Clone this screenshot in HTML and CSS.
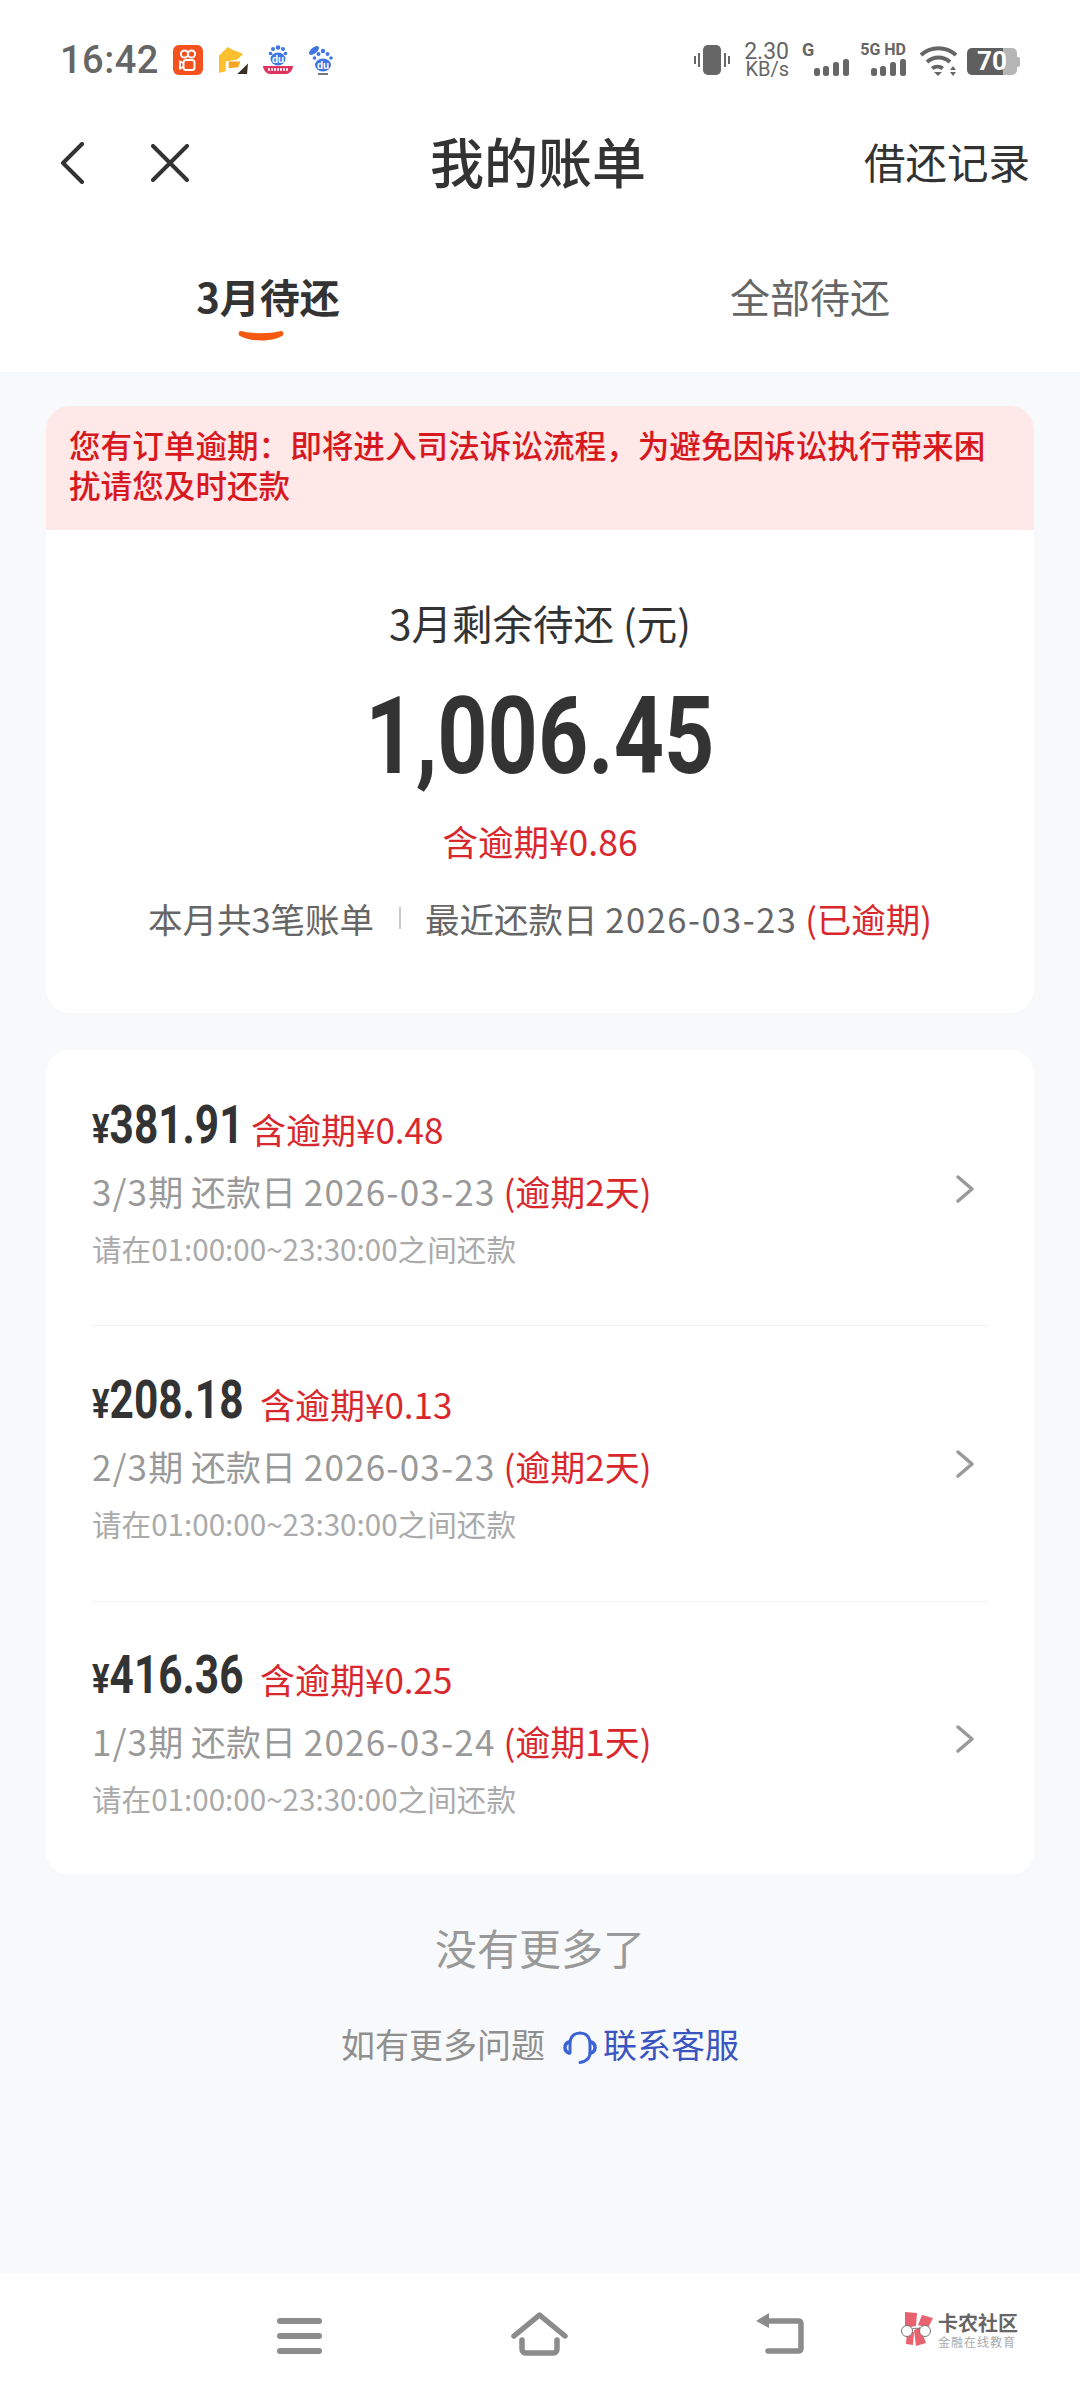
FILE: index.html
```html
<!DOCTYPE html>
<html lang="zh-CN">
<head>
    <meta charset="UTF-8">
    <meta name="viewport" content="width=device-width, initial-scale=1.0">
    <title>我的账单</title>
    <link rel="stylesheet" href="styles.css">
</head>
<body>
    <header class="top">
        <div class="status-bar">
            <span class="clock">16:42</span>
            <div class="app-icons">
                <svg class="app-icon" viewBox="0 0 30 30">
                    <rect width="30" height="30" rx="6" fill="#f4511e"/>
                    <circle cx="11.500" cy="9" r="3.600" fill="none" stroke="#fff" stroke-width="2"/>
                    <circle cx="18.500" cy="9" r="3.600" fill="none" stroke="#fff" stroke-width="2"/>
                    <rect x="10.500" y="15" width="11" height="10" rx="2.500" fill="none" stroke="#fff" stroke-width="2"/>
                    <path d="M10 18l-3 -1.500v7l3 -1.500" fill="none" stroke="#fff" stroke-width="1.800"/>
                </svg>
                <svg class="app-icon" viewBox="0 0 31 29">
                    <path d="M1 10L10 1l5 3 11 4 -6 6 -12 2v10l-7 2z" fill="#fbc02d"/>
                    <path d="M11 16h12l-2 6 -10 1z" fill="#f6a623"/>
                    <path d="M20 29L31 18l-1 11z" fill="#3b2f23"/>
                </svg>
                <svg class="app-icon" viewBox="0 0 30 30">
                    <g fill="#3f76e4">
                        <circle cx="15" cy="2.500" r="2.300"/><circle cx="10" cy="4" r="2"/><circle cx="20" cy="4" r="2"/>
                        <circle cx="7.500" cy="8.500" r="1.800"/><circle cx="22.500" cy="8.500" r="1.800"/>
                        <ellipse cx="15" cy="14" rx="7.500" ry="6.500"/>
                    </g>
                    <text class="du" x="15" y="17.500" font-size="10">du</text>
                    <path d="M0 21h30c0 3 -3 8 -7 8h-16c-4 0 -7 -5 -7 -8z" fill="#e0335f"/>
                    <path d="M5 24.500h20" stroke="#fff" stroke-width="2.500" stroke-dasharray="2 1"/>
                </svg>
                <svg class="app-icon app-icon-small" viewBox="0 0 25 30">
                    <ellipse cx="6" cy="5.500" rx="6" ry="3" transform="rotate(-40 6 5.500)" fill="#3f76e4"/>
                    <g fill="#3f76e4">
                        <circle cx="15" cy="6" r="2.200"/><circle cx="10.500" cy="9" r="2"/><circle cx="19.500" cy="9" r="2"/>
                        <circle cx="6.500" cy="13" r="1.800"/><circle cx="23" cy="13" r="1.800"/>
                        <ellipse cx="15" cy="20" rx="8" ry="6.500"/>
                    </g>
                    <text class="du" x="15" y="23.500" font-size="10">du</text>
                    <rect x="10" y="28" width="10" height="2" fill="#777"/>
                </svg>
            </div>
            <div class="status-right">
                <svg class="vibrate" viewBox="0 0 36 30">
                    <rect x="9" y="0" width="18" height="30" rx="5" fill="#666"/>
                    <path d="M5 8v14M1 11v8M31 8v14M35 11v8" stroke="#666" stroke-width="2"/>
                </svg>
                <div class="speed"><span>2.30</span><span class="speed-unit">KB/s</span></div>
                <div class="signal signal-g">
                    <span class="signal-label">G</span>
                    <svg class="bars" viewBox="0 0 35 17"><g fill="#666"><rect x="0" y="9" width="6" height="8" rx="2.500"/><rect x="9" y="7" width="6" height="10" rx="2.500"/><rect x="19" y="3" width="6" height="14" rx="2.500"/><rect x="29" y="0" width="6" height="17" rx="2.500"/></g></svg>
                </div>
                <div class="signal signal-5g">
                    <span class="signal-label">5G HD</span>
                    <svg class="bars" viewBox="0 0 35 17"><g fill="#666"><rect x="0" y="9" width="6" height="8" rx="2.500"/><rect x="9" y="7" width="6" height="10" rx="2.500"/><rect x="19" y="3" width="6" height="14" rx="2.500"/><rect x="29" y="0" width="6" height="17" rx="2.500"/></g></svg>
                </div>
                <svg class="wifi" viewBox="0 0 37 30">
                    <g fill="none" stroke="#666" stroke-width="4">
                        <path d="M1 9c10 -9 25 -9 35 0"/>
                        <path d="M7 16c7 -6 16 -6 23 0"/>
                    </g>
                    <path d="M11 21c4 -3 9 -3 13 0l-2.500 3c-3 -2 -5 -2 -8 0z" fill="#666"/>
                    <path d="M14 26h8l-4 4z" fill="#666"/>
                    <path d="M33 20l3 4h-6zM30 26h6l-3 4z" fill="#666"/>
                </svg>
                <div class="battery"><div class="battery-level">70</div><div class="battery-tip"></div></div>
            </div>
        </div>

        <nav class="nav-bar">
            <div class="nav-icons">
                <svg class="nav-back" viewBox="0 0 24 42"><path d="M22 2L3 21l19 19" fill="none" stroke="#333" stroke-width="4" stroke-linecap="round" stroke-linejoin="round"/></svg>
                <svg class="nav-close" viewBox="0 0 38 38"><path d="M2 2l34 34M36 2L2 36" fill="none" stroke="#333" stroke-width="4" stroke-linecap="round"/></svg>
            </div>
            <div class="nav-title">我的账单</div>
            <div class="nav-action">借还记录</div>
        </nav>

        <div class="tabs">
            <div class="tab tab-active">
                <span>3月待还</span>
                <svg class="tab-mark" viewBox="0 0 46 13"><path d="M3 1C15 4 31 4 43 1C46 1 46 5 44 6C34 12 12 12 2 6C0 5 0 1 3 1z" fill="#f4590f"/></svg>
            </div>
            <div class="tab">全部待还</div>
        </div>
    </header>

    <main class="content">
        <section class="card summary">
            <div class="warning">您有订单逾期：即将进入司法诉讼流程，为避免因诉讼执行带来困扰请您及时还款</div>
            <div class="summary-body">
                <div class="summary-title">3月剩余待还 (元)</div>
                <div class="summary-amount"><span>1,006.45</span></div>
                <div class="summary-late">含逾期¥0.86</div>
                <div class="summary-meta">
                    <span>本月共3笔账单</span>
                    <i class="meta-line"></i>
                    <span>最近还款日 <span class="num">2026-03-23</span> <em class="red">(已逾期)</em></span>
                </div>
            </div>
        </section>

        <section class="card bills">
            <div class="bill">
                <div class="bill-info">
                    <div class="bill-top"><span class="bill-amount"><small>¥</small>381.91</span><span class="bill-late">含逾期¥0.48</span></div>
                    <div class="bill-date"><span class="num">3/3</span>期 还款日 <span class="num">2026-03-23</span> <em class="red">(逾期2天)</em></div>
                    <div class="bill-hint">请在01:00:00~23:30:00之间还款</div>
                </div>
                <svg class="chevron" viewBox="0 0 20 30"><path d="M3 3l14 12L3 27" fill="none" stroke="#999" stroke-width="3.500" stroke-linecap="round" stroke-linejoin="round"/></svg>
            </div>
            <div class="bill">
                <div class="bill-info">
                    <div class="bill-top"><span class="bill-amount bill-amount-wide"><small>¥</small>208.18</span><span class="bill-late">含逾期¥0.13</span></div>
                    <div class="bill-date"><span class="num">2/3</span>期 还款日 <span class="num">2026-03-23</span> <em class="red">(逾期2天)</em></div>
                    <div class="bill-hint">请在01:00:00~23:30:00之间还款</div>
                </div>
                <svg class="chevron" viewBox="0 0 20 30"><path d="M3 3l14 12L3 27" fill="none" stroke="#999" stroke-width="3.500" stroke-linecap="round" stroke-linejoin="round"/></svg>
            </div>
            <div class="bill">
                <div class="bill-info">
                    <div class="bill-top"><span class="bill-amount bill-amount-wide"><small>¥</small>416.36</span><span class="bill-late">含逾期¥0.25</span></div>
                    <div class="bill-date"><span class="num">1/3</span>期 还款日 <span class="num">2026-03-24</span> <em class="red">(逾期1天)</em></div>
                    <div class="bill-hint">请在01:00:00~23:30:00之间还款</div>
                </div>
                <svg class="chevron" viewBox="0 0 20 30"><path d="M3 3l14 12L3 27" fill="none" stroke="#999" stroke-width="3.500" stroke-linecap="round" stroke-linejoin="round"/></svg>
            </div>
        </section>

        <div class="no-more">没有更多了</div>
        <div class="contact">
            <span>如有更多问题</span>
            <svg class="headset" viewBox="0 0 34 33">
                <path d="M7 22V13C7 6 11 2 17 2s10 4 10 11v9" fill="none" stroke="#3b63d6" stroke-width="3" stroke-linecap="round"/>
                <path d="M6 11C3 12 2 14 2 16.500S3 21 6 22M28 11c3 1 4 3 4 5.500S31 21 28 22" fill="none" stroke="#3b63d6" stroke-width="3.500" stroke-linecap="round"/>
                <path d="M27 22c0 5 -4 9 -10 9.500" fill="none" stroke="#3b63d6" stroke-width="3" stroke-linecap="round"/>
            </svg>
            <span class="contact-link">联系客服</span>
        </div>
    </main>

    <footer class="bottom-nav">
        <svg class="nav-menu" viewBox="0 0 45 36"><path d="M3 3h39M3 18h39M3 33h39" stroke="#8c8c8c" stroke-width="6" stroke-linecap="round"/></svg>
        <svg class="nav-home" viewBox="0 0 57 44"><path d="M3 24L28.500 3 54 24" fill="none" stroke="#8c8c8c" stroke-width="5.500" stroke-linecap="round" stroke-linejoin="round"/><path d="M11 28v9c0 3 2 4 4 4h27c2 0 4 -1 4 -4v-9" fill="none" stroke="#8c8c8c" stroke-width="5.500" stroke-linecap="round"/></svg>
        <svg class="nav-return" viewBox="0 0 48 42"><path d="M10 9h32c2 0 3 1 3 3v24c0 2 -1 3 -3 3H12" fill="none" stroke="#8c8c8c" stroke-width="5.500" stroke-linecap="round"/><path d="M0 9l13 -8v15z" fill="#8c8c8c"/></svg>
        <div class="watermark">
            <svg class="watermark-logo" viewBox="0 0 34 34">
                <g fill="#e9626f">
                    <path d="M5 0l12 1 -1 13 -11 2z"/>
                    <path d="M22 3l11 3 -5 10 -10 -3z"/>
                    <path d="M7 20h7l-1 13 -7 -1z"/>
                    <path d="M14 18l6 -3 6 16 -10 3z"/>
                </g>
                <circle cx="7" cy="19" r="5.500" fill="#fff" stroke="#777"/>
                <circle cx="25" cy="19" r="5.500" fill="#fff" stroke="#777"/>
                <path d="M12 17c3 -1 6 -1 8 0" fill="none" stroke="#777"/>
            </svg>
            <div class="watermark-text">
                <span class="watermark-name">卡农社区</span>
                <span class="watermark-sub">金融在线教育</span>
            </div>
        </div>
    </footer>
</body>
</html>
```

FILE: styles.css
```css
* {
    box-sizing: border-box;
}

body {
    margin: 0;
    width: 1080px;
    height: 2400px;
    display: flex;
    flex-direction: column;
    background-color: #f8f9fa;
    color: #333;
    font-family: "Noto Sans CJK SC", "Noto Sans", sans-serif;
}

em {
    font-style: normal;
}

.red {
    color: #d9272e;
}

.num {
    letter-spacing: 1.200px;
}

.top {
    height: 372px;
    background-color: #fff;
}

/* status bar */
.status-bar {
    height: 108px;
    padding: 42px 60px 0;
    display: flex;
    align-items: flex-start;
}

.clock {
    font-family: Roboto, sans-serif;
    font-size: 38px;
    font-weight: 500;
    line-height: 36px;
    letter-spacing: 0.500px;
    color: #666;
    width: 113px;
}

.app-icons {
    display: flex;
    gap: 15px;
    padding-top: 3px;
}

.app-icon {
    width: 30px;
    height: 30px;
}

.app-icon-small {
    width: 25px;
}

.du {
    fill: #fff;
    font-family: "Liberation Sans", sans-serif;
    font-weight: 700;
    text-anchor: middle;
}

.status-right {
    margin-left: auto;
    display: flex;
    align-items: flex-start;
}

.vibrate {
    width: 36px;
    height: 30px;
    margin-top: 3px;
}

.speed {
    width: 46px;
    margin-left: 13px;
    display: flex;
    flex-direction: column;
    align-items: flex-end;
    font-family: Roboto, sans-serif;
    font-size: 23px;
    line-height: 19px;
    color: #666;
}

.speed-unit {
    font-size: 20px;
    line-height: 17px;
}

.signal {
    display: flex;
    flex-direction: column;
    align-items: flex-end;
    font-family: Roboto, sans-serif;
    font-weight: 700;
    color: #666;
}

.signal-label {
    line-height: 16px;
    white-space: nowrap;
}

.signal-g {
    width: 47px;
    margin-left: 13px;
    align-items: flex-start;
    font-size: 18px;
}

.signal-5g {
    width: 47px;
    margin-left: 10px;
    font-size: 16px;
}

.bars {
    width: 35px;
    height: 17px;
    margin-top: 1px;
}

.signal-g .bars {
    align-self: flex-end;
}

.wifi {
    width: 37px;
    height: 30px;
    margin: 4px 0 0 14px;
}

.battery {
    display: flex;
    align-items: center;
    margin: 6px 0 0 10px;
}

.battery-level {
    width: 50px;
    height: 27px;
    border-radius: 5px;
    background: linear-gradient(to right, #5f5f5f 0 36px, #b5b5b5 36px);
    color: #fff;
    font-family: Roboto, sans-serif;
    font-size: 26px;
    font-weight: 700;
    line-height: 27px;
    text-align: center;
}

.battery-tip {
    width: 3px;
    height: 10px;
    background-color: #b5b5b5;
    border-radius: 0 2px 2px 0;
}

/* nav */
.nav-bar {
    height: 110px;
    padding: 0 50px 0 60px;
    display: flex;
    align-items: center;
    justify-content: space-between;
}

.nav-icons {
    width: 236px;
    display: flex;
    align-items: center;
    gap: 67px;
}

.nav-back {
    width: 24px;
    height: 42px;
}

.nav-close {
    width: 38px;
    height: 38px;
}

.nav-title {
    margin-top: -5px;
    font-size: 54px;
    font-weight: 500;
}

.nav-action {
    margin-top: -5px;
    width: 250px;
    text-align: right;
    font-size: 41.500px;
}

.tabs {
    display: flex;
    padding-top: 48px;
}

.tab {
    width: 540px;
    height: 60px;
    line-height: 60px;
    text-align: center;
    font-size: 40px;
    color: #666;
}

.tab-active {
    display: flex;
    flex-direction: column;
    align-items: center;
    padding-right: 4px;
    font-weight: 700;
    color: #333;
}

.tab-mark {
    flex-shrink: 0;
    width: 46px;
    height: 13px;
    margin: 4px 14px 0 0;
}

/* cards */
.content {
    flex: 1;
    padding: 34px 46px 0;
    display: flex;
    flex-direction: column;
}

.card {
    background-color: #fff;
    border-radius: 24px;
    overflow: hidden;
}

.warning {
    height: 124px;
    padding: 18px 23px 0;
    background-color: #fee8e8;
    color: #d7191f;
    font-size: 31.600px;
    font-weight: 500;
    line-height: 40px;
}

.summary-body {
    padding: 68px 0 70px;
    display: flex;
    flex-direction: column;
    align-items: center;
}

.summary-title {
    font-size: 40.500px;
    line-height: 50px;
}

.summary-amount {
    margin-top: 29px;
    height: 120px;
    line-height: 120px;
    font-family: Roboto, sans-serif;
    font-size: 107px;
    font-weight: 700;
}

.summary-amount span {
    display: inline-block;
    transform: scaleX(0.82);
}

.summary-late {
    margin-top: 19px;
    font-size: 35.500px;
    line-height: 50px;
    color: #d9272e;
}

.summary-meta {
    margin-top: 27px;
    display: flex;
    align-items: center;
    font-size: 34.500px;
    line-height: 50px;
    color: #666;
    white-space: pre;
}

.summary-meta .num {
    letter-spacing: 1.500px;
}

.meta-line {
    width: 2px;
    height: 22px;
    margin: 0 24px 0 25px;
    background-color: #ccc;
}

.bills {
    margin-top: 37px;
    padding: 0 46px;
}

.bill {
    height: 276px;
    padding: 44px 13px 0 0;
    display: flex;
    align-items: center;
    justify-content: space-between;
    border-bottom: 1px solid #f2f2f2;
}

.bill:first-child {
    padding-top: 45px;
}

.bill:last-child {
    height: 273px;
    padding-top: 43px;
    border-bottom: 0;
}

.bill-info {
    align-self: flex-start;
}

.bill-top {
    height: 60px;
    display: flex;
    align-items: center;
    gap: 11px;
}

.bill-amount {
    display: inline-block;
    width: 148px;
    font-family: Roboto, sans-serif;
    font-size: 53px;
    font-weight: 700;
    transform: scaleX(0.8);
    transform-origin: left center;
    white-space: nowrap;
}

.bill-amount small {
    font-size: 41px;
}

.bill-amount-wide {
    width: 157px;
}

.bill-late {
    padding-top: 6px;
    font-size: 35px;
    color: #d9272e;
}

.bill-date {
    margin-top: 11px;
    font-size: 35px;
    line-height: 50px;
    color: #999;
}

.bill-hint {
    margin-top: 11px;
    font-size: 29.600px;
    line-height: 44px;
    color: #aaa;
}

.chevron {
    width: 20px;
    height: 30px;
    margin-top: -43px;
}

.no-more {
    margin-top: 42px;
    text-align: center;
    font-size: 42px;
    line-height: 60px;
    color: #999;
}

.contact {
    margin-top: 42px;
    display: flex;
    justify-content: center;
    align-items: center;
    font-size: 34px;
    line-height: 50px;
    color: #8f8f8f;
}

.headset {
    width: 34px;
    height: 33px;
    margin: 6px 6px 0 18px;
}

.contact-link {
    color: #3a55c0;
}

/* system nav */
.bottom-nav {
    height: 127px;
    padding: 39px 0 0 277px;
    background-color: #fff;
    display: flex;
    align-items: flex-start;
}

.nav-menu {
    width: 45px;
    height: 36px;
    margin-top: 6px;
}

.nav-home {
    width: 57px;
    height: 44px;
    margin-left: 189px;
}

.nav-return {
    width: 48px;
    height: 42px;
    margin-left: 188px;
}

.watermark {
    margin-left: 96px;
    display: flex;
    align-items: flex-start;
    gap: 4px;
}

.watermark-logo {
    width: 34px;
    height: 34px;
}

.watermark-text {
    display: flex;
    flex-direction: column;
}

.watermark-name {
    font-size: 20px;
    line-height: 22px;
    font-weight: 700;
    color: #666;
}

.watermark-sub {
    font-size: 12px;
    letter-spacing: 1px;
    line-height: 16px;
    color: #aaa;
}
```
